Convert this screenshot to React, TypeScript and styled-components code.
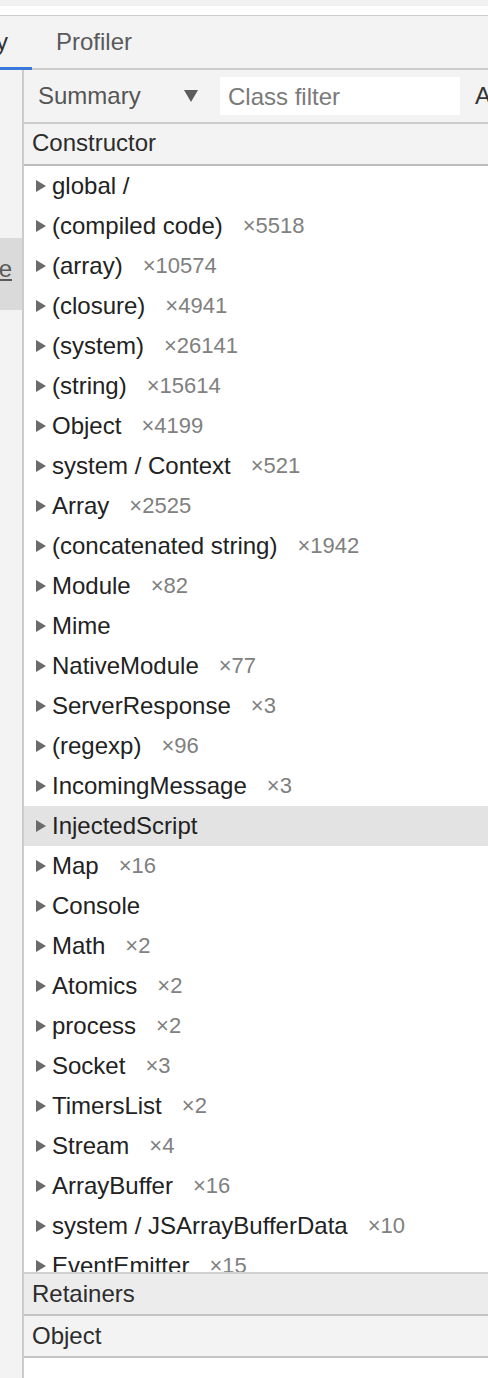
import React from "react";
import styled, { createGlobalStyle } from "styled-components";

const Global = createGlobalStyle`
  html, body { margin: 0; padding: 0; background: #ffffff; }
  body { font-family: "Liberation Sans", Arial, sans-serif; }
  * { box-sizing: border-box; }
`;

const Page = styled.div`
  width: 488px;
  height: 1378px;
  overflow: hidden;
  display: flex;
  flex-direction: column;
  background: #ffffff;
`;

const TopStrip = styled.div`
  height: 6px;
  background: #f1f1f1;
  flex: none;
`;

const WhiteStrip = styled.div`
  height: 10px;
  background: #ffffff;
  border-bottom: 1px solid #cbcbcb;
  flex: none;
`;

const TabBar = styled.div`
  height: 54px;
  flex: none;
  display: flex;
  align-items: stretch;
  background: #f3f3f3;
  border-bottom: 2px solid #cccccc;
`;

const Tab = styled.div<{ $active?: boolean; $clipped?: boolean }>`
  display: flex;
  align-items: center;
  justify-content: ${(p) => (p.$clipped ? "flex-end" : "flex-start")};
  width: ${(p) => (p.$clipped ? "32px" : "auto")};
  padding: ${(p) => (p.$clipped ? "0 24px 0 0" : "0 24px")};
  overflow: hidden;
  white-space: nowrap;
  font-size: 24px;
  color: ${(p) => (p.$active ? "#333333" : "#5a5a5a")};
  margin-bottom: -2px;
  border-bottom: 3px solid ${(p) => (p.$active ? "#3879d9" : "transparent")};
`;

const Main = styled.div`
  flex: 1;
  display: flex;
  min-height: 0;
`;

const Sidebar = styled.div`
  width: 24px;
  flex: none;
  background: #f3f3f3;
  border-right: 2px solid #cccccc;
  display: flex;
  flex-direction: column;
  padding-top: 168px;
`;

const SidebarItem = styled.div<{ $selected?: boolean }>`
  height: 72px;
  background: ${(p) => (p.$selected ? "#dadada" : "transparent")};
  display: flex;
  justify-content: flex-end;
  align-items: center;
  padding-right: 10px;
  padding-bottom: 10px;
  overflow: hidden;
  white-space: nowrap;
  font-size: 24px;
  color: #5a5a5a;
  text-decoration: underline;
`;

const Content = styled.div`
  flex: 1;
  min-width: 0;
  display: flex;
  flex-direction: column;
`;

const Toolbar = styled.div`
  height: 54px;
  flex: none;
  display: flex;
  align-items: center;
  background: #f3f3f3;
  border-bottom: 2px solid #cccccc;
  padding-left: 14px;
  white-space: nowrap;
  overflow: hidden;
`;

const Select = styled.div`
  display: flex;
  align-items: center;
  width: 182px;
  font-size: 24px;
  color: #555555;
  flex: none;
`;

const SelectLabel = styled.span`
  flex: 1;
`;

const Caret = styled.svg`
  width: 14px;
  height: 12px;
  margin-right: 22px;
  flex: none;
`;

const FilterInput = styled.div`
  width: 240px;
  height: 38px;
  flex: none;
  background: #ffffff;
  display: flex;
  align-items: center;
  padding-left: 8px;
  padding-top: 2px;
  font-size: 24px;
  color: #7a7a7a;
`;

const ToolbarText = styled.span`
  margin-left: 15px;
  font-size: 24px;
  color: #333333;
`;

const Header = styled.div<{ $bg?: string; $top?: boolean }>`
  flex: none;
  height: ${(p) => (p.$top ? "44px" : "42px")};
  display: flex;
  align-items: center;
  padding-left: 8px;
  font-size: 24px;
  color: #2c2c2c;
  background: ${(p) => p.$bg || "#f3f3f3"};
  border-bottom: 2px solid #c4c4c4;
  border-top: ${(p) => (p.$top ? "2px solid #d0d0d0" : "none")};
`;

const ColumnHeader = styled.div`
  flex: none;
  height: 42px;
  display: flex;
  align-items: center;
  padding-left: 8px;
  padding-bottom: 2px;
  font-size: 24px;
  color: #2c2c2c;
  background: #f3f3f3;
  border-bottom: 2px solid #bdbdbd;
`;

const Rows = styled.div`
  height: 1106px;
  flex: none;
  overflow: hidden;
  background: #ffffff;
`;

const Row = styled.div<{ $selected?: boolean }>`
  height: 40px;
  display: flex;
  align-items: center;
  padding-left: 12px;
  white-space: nowrap;
  background: ${(p) => (p.$selected ? "#e3e3e3" : "transparent")};
`;

const Arrow = styled.svg`
  width: 11px;
  height: 14px;
  flex: none;
  margin-right: 5px;
`;

const Name = styled.span`
  font-size: 24px;
  color: #222222;
`;

const Count = styled.span`
  font-size: 22px;
  color: #808080;
  margin-left: 20px;
`;

const Blank = styled.div`
  flex: 1;
  background: #ffffff;
`;

const rows: { name: string; count?: string }[] = [
  { name: "global /" },
  { name: "(compiled code)", count: "5518" },
  { name: "(array)", count: "10574" },
  { name: "(closure)", count: "4941" },
  { name: "(system)", count: "26141" },
  { name: "(string)", count: "15614" },
  { name: "Object", count: "4199" },
  { name: "system / Context", count: "521" },
  { name: "Array", count: "2525" },
  { name: "(concatenated string)", count: "1942" },
  { name: "Module", count: "82" },
  { name: "Mime" },
  { name: "NativeModule", count: "77" },
  { name: "ServerResponse", count: "3" },
  { name: "(regexp)", count: "96" },
  { name: "IncomingMessage", count: "3" },
  { name: "InjectedScript" },
  { name: "Map", count: "16" },
  { name: "Console" },
  { name: "Math", count: "2" },
  { name: "Atomics", count: "2" },
  { name: "process", count: "2" },
  { name: "Socket", count: "3" },
  { name: "TimersList", count: "2" },
  { name: "Stream", count: "4" },
  { name: "ArrayBuffer", count: "16" },
  { name: "system / JSArrayBufferData", count: "10" },
  { name: "EventEmitter", count: "15" },
];

export default function App() {
  return (
    <Page>
      <Global />
      <TopStrip />
      <WhiteStrip />
      <TabBar>
        <Tab $active $clipped>Memory</Tab>
        <Tab>Profiler</Tab>
      </TabBar>
      <Main>
        <Sidebar>
          <SidebarItem $selected>Save</SidebarItem>
        </Sidebar>
        <Content>
          <Toolbar>
            <Select>
              <SelectLabel>Summary</SelectLabel>
              <Caret viewBox="0 0 14 12">
                <path d="M0 0 L14 0 L7 12 Z" fill="#5c5c5c" />
              </Caret>
            </Select>
            <FilterInput>Class filter</FilterInput>
            <ToolbarText>All objects</ToolbarText>
          </Toolbar>
          <ColumnHeader>Constructor</ColumnHeader>
          <Rows>
            {rows.map((r) => (
              <Row key={r.name} $selected={r.name === "InjectedScript"}>
                <Arrow viewBox="0 0 11 14">
                  <path d="M0 1 L10 7 L0 13 Z" fill="#6a6a6a" />
                </Arrow>
                <Name>{r.name}</Name>
                {r.count && <Count>×{r.count}</Count>}
              </Row>
            ))}
          </Rows>
          <Header $top $bg="#ececec">Retainers</Header>
          <Header>Object</Header>
          <Blank />
        </Content>
      </Main>
    </Page>
  );
}
